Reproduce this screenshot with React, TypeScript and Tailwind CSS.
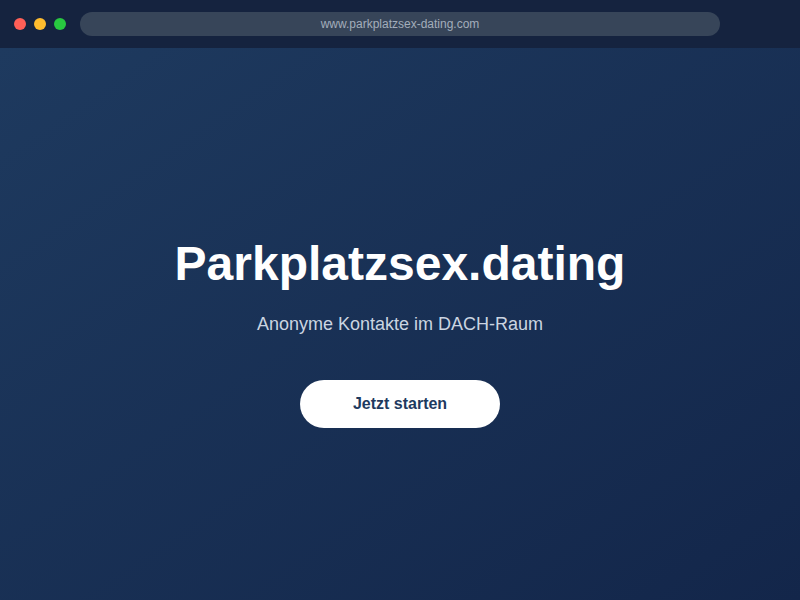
import React from "react";

export default function App() {
  return (
    <div className="w-[800px] h-[600px] flex flex-col overflow-hidden" style={{ fontFamily: '"Liberation Sans", Arial, sans-serif' }}>
      <div className="h-[48px] shrink-0 bg-[#15233f] flex items-center px-[14px] gap-[8px]">
        <div className="w-[12px] h-[12px] rounded-full bg-[#ff5f57]" />
        <div className="w-[12px] h-[12px] rounded-full bg-[#febc2e]" />
        <div className="w-[12px] h-[12px] rounded-full bg-[#28c840]" />
        <div className="ml-[6px] w-[640px] h-[24px] rounded-full bg-[#374559] flex items-center justify-center text-[12px] text-[#a3adbb]">
          www.parkplatzsex-dating.com
        </div>
      </div>
      <div className="flex-1 pt-[20px] bg-gradient-to-br from-[#1e3a5f] to-[#13264a] flex flex-col items-center justify-center">
        <h1 className="text-[48px] leading-none font-bold text-white">Parkplatzsex.dating</h1>
        <p className="mt-[27px] text-[18px] leading-none text-[#cbd5e1]">Anonyme Kontakte im DACH-Raum</p>
        <button className="mt-[47px] w-[200px] h-[48px] rounded-full bg-white text-[#1e3a5f] font-bold text-[16px]">
          Jetzt starten
        </button>
      </div>
    </div>
  );
}
